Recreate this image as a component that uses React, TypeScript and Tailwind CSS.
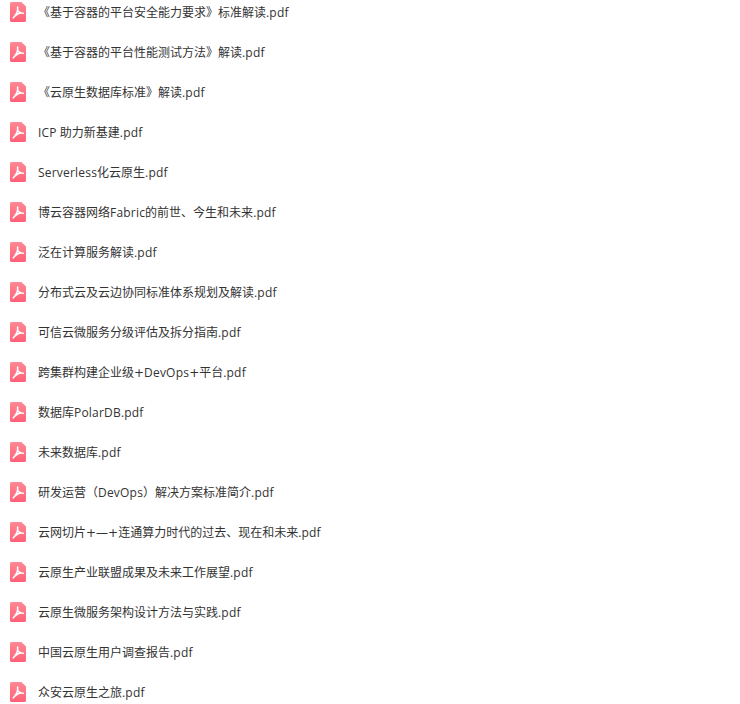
const files = [
  '《基于容器的平台安全能力要求》标准解读.pdf',
  '《基于容器的平台性能测试方法》解读.pdf',
  '《云原生数据库标准》解读.pdf',
  'ICP 助力新基建.pdf',
  'Serverless化云原生.pdf',
  '博云容器网络Fabric的前世、今生和未来.pdf',
  '泛在计算服务解读.pdf',
  '分布式云及云边协同标准体系规划及解读.pdf',
  '可信云微服务分级评估及拆分指南.pdf',
  '跨集群构建企业级+DevOps+平台.pdf',
  '数据库PolarDB.pdf',
  '未来数据库.pdf',
  '研发运营（DevOps）解决方案标准简介.pdf',
  '云网切片+—+连通算力时代的过去、现在和未来.pdf',
  '云原生产业联盟成果及未来工作展望.pdf',
  '云原生微服务架构设计方法与实践.pdf',
  '中国云原生用户调查报告.pdf',
  '众安云原生之旅.pdf',
];

const PdfIcon = () => (
  <svg width="16" height="20" viewBox="0 0 16 20" className="shrink-0">
    <defs>
      <linearGradient id="pdf-bg" x1="0" y1="0" x2="0" y2="1">
        <stop offset="0" stopColor="#ff8a94" />
        <stop offset="1" stopColor="#ff5f78" />
      </linearGradient>
    </defs>
    <path d="M1.5 0H11.5L16 4.5V18.5A1.5 1.5 0 0 1 14.5 20H1.5A1.5 1.5 0 0 1 0 18.5V1.5A1.5 1.5 0 0 1 1.5 0Z" fill="url(#pdf-bg)" />
    <path
      d="M7.6 5V7.5C7.6 9.5 6.2 12.5 3.2 16M4.8 14.2C6.5 12.2 9.5 10.6 13.4 11.2M7.7 8C8.2 9.6 9.6 10.6 11.4 11"
      fill="none"
      stroke="#ffffff"
      strokeWidth="1.5"
      strokeLinecap="round"
      strokeLinejoin="round"
    />
  </svg>
);

// latin runs sit a bit wider in the reference, and the plus signs much wider
const FileName = ({ name }: { name: string }) => (
  <span className="text-xs leading-[22px] text-[#333333]">
    {name.split(/(\+|[A-Za-z.]+)/).map((part, i) =>
      part === '+' ? (
        <span key={i} className="font-['DejaVu_Sans']">+</span>
      ) : /^[A-Za-z.]+$/.test(part) ? (
        <span key={i} className="tracking-[0.2px]">{part}</span>
      ) : (
        part
      )
    )}
  </span>
);

export default function App() {
  return (
    <div className="min-h-screen overflow-hidden bg-white font-['Open_Sans','Noto_Sans_CJK_SC',sans-serif]">
      <ul className="flex flex-col pl-[10px] pt-[2px]">
        {files.map((name) => (
          <li key={name} className="flex h-[40px] items-start gap-3">
            <PdfIcon />
            <FileName name={name} />
          </li>
        ))}
      </ul>
    </div>
  );
}
